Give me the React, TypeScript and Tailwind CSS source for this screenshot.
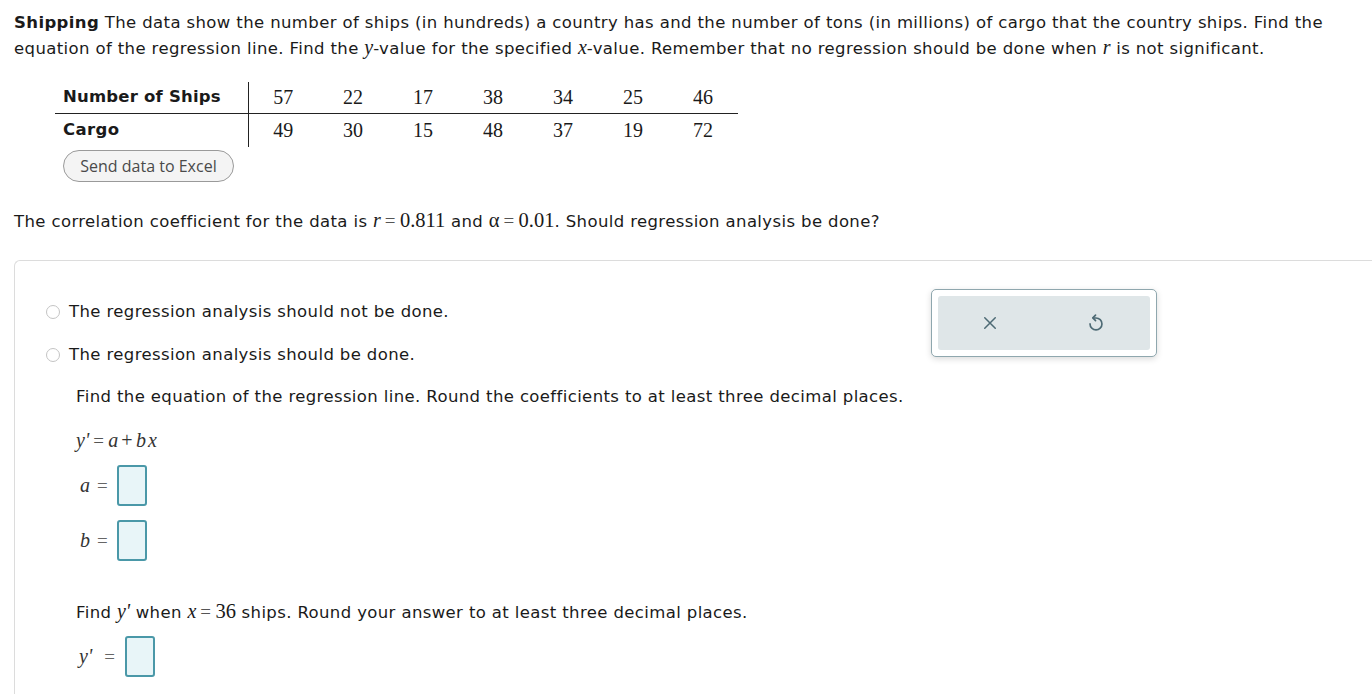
import React from "react";

const ships = [57, 22, 17, 38, 34, 25, 46];
const cargo = [49, 30, 15, 48, 37, 19, 72];

const M = ({ children }: { children: React.ReactNode }) => (
  <span className="font-['Liberation_Serif',serif] italic text-[20px] leading-none tracking-normal">{children}</span>
);
const N = ({ children }: { children: React.ReactNode }) => (
  <span className="font-['Liberation_Serif',serif] text-[20.5px] leading-none tracking-normal">{children}</span>
);
const Eq = () => (
  <span className="font-['Liberation_Serif',serif] text-[19px] leading-none text-[#555] mx-[4px]">=</span>
);
const Plus = () => (
  <span className="font-['Liberation_Serif',serif] text-[20px] leading-none mx-[3px]">+</span>
);

const AnswerBox = () => (
  <div className="w-[30px] h-[41px] rounded-[3px] border-2 border-[#4a98a8] bg-[#e8f5f8]" />
);

const AnswerRow = ({ label, className, eqClass }: { label: string; className: string; eqClass: string }) => (
  <div className={`flex items-center ${className}`}>
    <span className="text-[#333] leading-none">
      <M>{label}</M>
      <span className={`font-['Liberation_Serif',serif] text-[19px] text-[#666] ${eqClass}`}>=</span>
    </span>
    <AnswerBox />
  </div>
);

const Radio = ({ label }: { label: string }) => (
  <label className="flex items-center gap-[9px]">
    <span className="w-[14px] h-[14px] rounded-full border border-[#c4c4c4] bg-white" />
    <span>{label}</span>
  </label>
);

const App = () => {
  return (
    <div className="w-[1372px] h-[694px] overflow-hidden bg-white text-[#1a1a1a] font-['DejaVu_Sans',Verdana,sans-serif] text-[16.5px] tracking-[0.38px]">
      <div className="px-[14px] pt-[10px]">
        <p className="leading-[26px] w-[1345px]">
          <b>Shipping</b> The data show the number of ships (in hundreds) a country has and the number of tons (in millions) of cargo that the country ships. Find the equation of the regression line. Find the <M>y</M>-value for the specified <M>x</M>-value. Remember that no regression should be done when <M>r</M> is not significant.
        </p>

        <div className="ml-[41px] mt-[20px]">
          <table className="border-collapse">
            <tbody>
              <tr className="border-b border-[#222]">
                <td className="font-bold w-[193px] pl-[8px] h-[31px] border-r border-[#222] tracking-[0.2px]">Number of Ships</td>
                {ships.map((v, i) => (
                  <td key={i} className="w-[70px] text-center font-['Liberation_Serif',serif] text-[20px] tracking-normal">{v}</td>
                ))}
              </tr>
              <tr>
                <td className="font-bold pl-[8px] h-[34px] border-r border-[#222]">Cargo</td>
                {cargo.map((v, i) => (
                  <td key={i} className="text-center font-['Liberation_Serif',serif] text-[20px] tracking-normal">{v}</td>
                ))}
              </tr>
            </tbody>
          </table>
          <button className="ml-[8px] mt-[3px] h-[32px] w-[171px] rounded-full border border-[#9a9a9a] bg-[#f4f4f4] text-[#4a4a4a] text-[16px] tracking-normal font-['Open_Sans',sans-serif] font-medium">
            Send data to Excel
          </button>
        </div>

        <p className="mt-[27px] leading-[26px]">
          The correlation coefficient for the data is <M>r</M>
          <Eq />
          <N>0.811</N> and <N>α</N>
          <Eq />
          <N>0.01</N>. Should regression analysis be done?
        </p>
      </div>

      <div className="ml-[14px] mt-[25px] border-t border-l border-[#dcdcdc] rounded-tl-[6px] h-[500px] flex">
        <div className="pl-[31px] pt-[39px] w-[900px]">
          <div className="flex flex-col gap-[18px]">
            <Radio label="The regression analysis should not be done." />
            <Radio label="The regression analysis should be done." />
          </div>
          <div className="pl-[30px] mt-[16px]">
            <p className="leading-[26px]">
              Find the equation of the regression line. Round the coefficients to at least three decimal places.
            </p>
            <p className="mt-[19px] text-[#333] leading-[26px]">
              <M>y'</M>
              <Eq />
              <M>a</M>
              <Plus />
              <M>b</M>
              <span className="ml-[2px]"><M>x</M></span>
            </p>
            <AnswerRow label="a" className="mt-[10px] pl-[4px]" eqClass="ml-[7px] mr-[9px]" />
            <AnswerRow label="b" className="mt-[14px] pl-[4px]" eqClass="ml-[7px] mr-[9px]" />
            <p className="mt-[39px] leading-[26px]">
              Find <M>y'</M> when <M>x</M>
              <Eq />
              <N>36</N> ships. Round your answer to at least three decimal places.
            </p>
            <AnswerRow label="y'" className="mt-[10px] pl-[3px]" eqClass="ml-[12px] mr-[10px]" />
          </div>
        </div>
        <div className="pt-[28px] pl-[16px]">
          <div className="w-[226px] h-[68px] rounded-[5px] border border-[#8fa7ae] bg-white p-[6px] shadow-[0_2px_6px_rgba(0,0,0,0.15)]">
            <div className="h-full rounded-[3px] bg-[#dfe6e8] flex items-center justify-around text-[#4d6a74]">
              <svg width="18" height="18" viewBox="0 0 24 24" fill="none" stroke="currentColor" strokeWidth="2" strokeLinecap="round">
                <path d="M5 5l14 14M19 5L5 19" />
              </svg>
              <svg width="22" height="22" viewBox="0 0 24 24" fill="none" stroke="currentColor" strokeWidth="1.8" strokeLinecap="round" strokeLinejoin="round">
                <path d="M11.5 3.5L8.5 6.5L11.5 9.5" />
                <path d="M9 6.5h3a6.5 6.5 0 1 1-6.5 6.5" />
              </svg>
            </div>
          </div>
        </div>
      </div>
    </div>
  );
};

export default App;
